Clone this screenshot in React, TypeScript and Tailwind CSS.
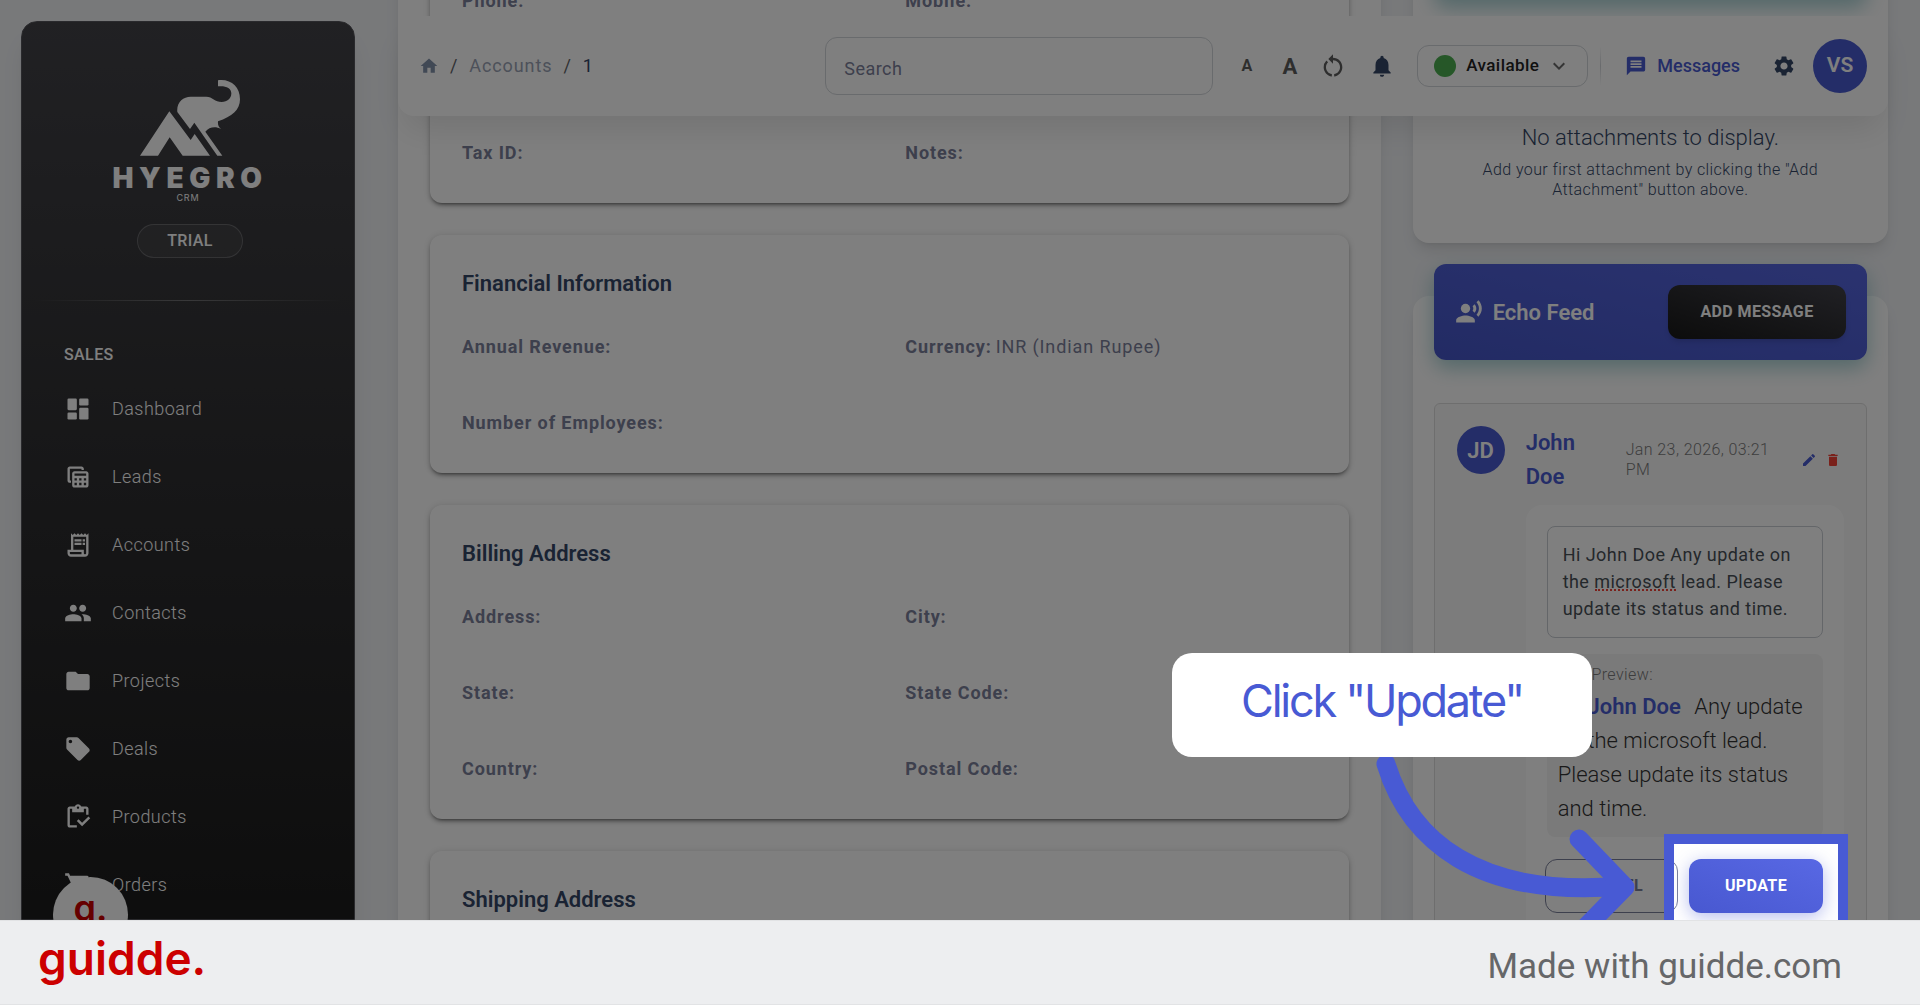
import type { ReactNode } from "react";
import {
  MdDelete,
  MdEdit,
  MdFolder,
  MdHome,
  MdKeyboardArrowDown,
  MdLocalOffer,
  MdMessage,
  MdNotifications,
  MdOutlineInventory,
  MdOutlineReceiptLong,
  MdOutlineTableView,
  MdPeople,
  MdRecordVoiceOver,
  MdRestartAlt,
  MdSettings,
  MdShoppingCart,
} from "react-icons/md";

type Field = { label: string; value?: string };

const navItems: { label: string; icon: ReactNode }[] = [
  { label: "Dashboard", icon: <DashboardIcon /> },
  { label: "Leads", icon: <MdOutlineTableView /> },
  { label: "Accounts", icon: <MdOutlineReceiptLong /> },
  { label: "Contacts", icon: <MdPeople /> },
  { label: "Projects", icon: <MdFolder /> },
  { label: "Deals", icon: <MdLocalOffer /> },
  { label: "Products", icon: <MdOutlineInventory /> },
  { label: "Orders", icon: <MdShoppingCart /> },
];

const sections: { title?: string; fields: Field[] }[] = [
  {
    fields: [
      { label: "Phone:" },
      { label: "Mobile:" },
      { label: "" },
      { label: "" },
      { label: "Tax ID:" },
      { label: "Notes:" },
    ],
  },
  {
    title: "Financial Information",
    fields: [
      { label: "Annual Revenue:" },
      { label: "Currency:", value: "INR (Indian Rupee)" },
      { label: "Number of Employees:" },
    ],
  },
  {
    title: "Billing Address",
    fields: [
      { label: "Address:" },
      { label: "City:" },
      { label: "State:" },
      { label: "State Code:" },
      { label: "Country:" },
      { label: "Postal Code:" },
    ],
  },
  { title: "Shipping Address", fields: [] },
];

function DashboardIcon() {
  return (
    <svg viewBox="0 0 24 24" width="1em" height="1em" fill="currentColor">
      <rect x="3" y="3" width="8" height="10" rx="1" />
      <rect x="3" y="15" width="8" height="6" rx="1" />
      <rect x="13" y="11" width="8" height="10" rx="1" />
      <rect x="13" y="3" width="8" height="6" rx="1" />
    </svg>
  );
}

function ElephantLogo() {
  return (
    <svg
      viewBox="420 235 306 232"
      className="ml-1 w-[102px]"
      fill="currentColor"
      aria-hidden="true"
    >
      <path d="M423 465 511 332l64 86 12-18 46 65h-82l-39-55-35 55z" />
      <path d="M657 239c38-5 66 19 66 57 0 32-24 52-66 66-1 9 1 17 10 23-19-9-36-6-48 8l51 72h-15l-69-99-13 19-38-51c-3-29 17-46 40-46h47c18 0 26 16 46 16 17 0 29-10 29-26 0-17-17-23-40-21z" />
    </svg>
  );
}

function Sidebar() {
  return (
    <aside className="mt-[21px] ml-[21px] flex w-[334px] shrink-0 flex-col rounded-t-2xl border border-[#55555a] bg-linear-to-b from-[#424247] to-[#1c1c1c] text-white shadow-xl">
      <div className="flex flex-col items-center pt-[57px]">
        <div className="flex flex-col items-center">
          <ElephantLogo />
          <span className="mt-2 pl-1 font-[Inter] text-[28px] leading-7 font-black tracking-[0.2em]">
            HYEGRO
          </span>
          <span className="font-[Inter] text-[9px] leading-3 tracking-widest">CRM</span>
        </div>
        <span className="mt-5 ml-1 rounded-full border border-white/20 bg-white/5 px-[29px] py-1 text-base leading-6 font-medium tracking-wide">
          TRIAL
        </span>
      </div>
      <div className="mx-3 mt-[42px] h-px bg-linear-to-r from-transparent via-white/30 to-transparent" />
      <h6 className="mt-[42px] px-[42px] text-base leading-6 font-medium tracking-wide">SALES</h6>
      <nav className="mt-2 flex flex-col">
        {navItems.map((item) => (
          <a key={item.label} href="#" className="flex h-[68px] items-center gap-5 px-[42px]">
            <span className="text-[28px]">{item.icon}</span>
            <span className="text-lg font-light tracking-wide">{item.label}</span>
          </a>
        ))}
      </nav>
    </aside>
  );
}

function Header() {
  return (
    <header className="absolute inset-x-0 top-4 z-10 flex h-[100px] items-center rounded-2xl bg-white px-[21px] shadow-[0_20px_32px_-8px_rgba(0,0,0,0.1)]">
      <nav className="flex items-center gap-[11px] text-lg tracking-wider">
        <a href="#" aria-label="Home" className="text-[20px] text-[#8392ab]">
          <MdHome />
        </a>
        <span className="text-[#5f6368]">/</span>
        <a href="#" className="text-[#9aa3b5]">
          Accounts
        </a>
        <span className="text-[#5f6368]">/</span>
        <span className="text-[#344767]">1</span>
      </nav>
      <input
        type="search"
        aria-label="Search"
        placeholder="Search"
        className="ml-auto h-[58px] w-[388px] rounded-xl border border-[#d2d6da] px-[18px] pt-1 text-lg tracking-wide placeholder:text-[#7b809a]"
      />
      <div className="ml-3 flex items-center text-[#5c5c5c]">
        <button aria-label="Smaller text" className="w-[43px] text-base font-bold">
          A
        </button>
        <button aria-label="Larger text" className="w-[43px] text-[22px] font-bold">
          A
        </button>
        <button aria-label="Reset text size" className="flex w-[43px] justify-center text-[28px]">
          <MdRestartAlt />
        </button>
      </div>
      <button
        aria-label="Notifications"
        className="flex w-[56px] justify-center text-[26px] text-[#344767]"
      >
        <MdNotifications />
      </button>
      <label className="relative ml-[7px] flex h-[42px] w-[171px] items-center rounded-xl border border-[#d2d6da] pl-4">
        <span className="size-[22px] rounded-full bg-[#4caf50]" />
        <select
          aria-label="Status"
          className="ml-2.5 flex-1 appearance-none text-[17px] font-medium tracking-wide text-[#222222]"
        >
          <option>Available</option>
        </select>
        <MdKeyboardArrowDown className="absolute right-4 text-2xl text-[#6b6b6b]" />
      </label>
      <span className="ml-3 h-10 w-px bg-linear-to-b from-transparent via-[#d2d6da] to-transparent" />
      <a href="#" className="ml-6 flex items-center gap-2.5 text-lg font-medium text-[#485ad0]">
        <MdMessage className="text-[22px]" />
        Messages
      </a>
      <button aria-label="Settings" className="ml-8 text-2xl text-[#344767]">
        <MdSettings />
      </button>
      <span className="ml-[17px] flex size-[54px] items-center justify-center rounded-full bg-[#485ad0] text-[21px] font-semibold text-white">
        VS
      </span>
    </header>
  );
}

function DetailCard({ title, fields }: { title?: string; fields: Field[] }) {
  return (
    <section className="rounded-xl bg-white px-8 pt-8 pb-3 shadow-[0_3px_3px_-2px_rgba(0,0,0,0.4),0_3px_4px_rgba(0,0,0,0.2),0_1px_8px_rgba(0,0,0,0.14)]">
      {title && (
        <h5 className="mb-2 text-[22px] leading-[34px] font-semibold text-[#344767]">{title}</h5>
      )}
      <dl className="grid grid-cols-2 gap-x-8">
        {fields.map((field, index) => (
          <div
            key={index}
            className="flex h-[76px] items-center gap-1 text-lg tracking-wider text-[#7b809a]"
          >
            <dt className="font-bold">{field.label}</dt>
            <dd>{field.value}</dd>
          </div>
        ))}
      </dl>
    </section>
  );
}

function BlueBar({ children }: { children?: ReactNode }) {
  return (
    <div className="-mt-8 flex h-24 items-center rounded-xl bg-linear-to-tr from-[#4556c8] to-[#5666e0] px-[21px] text-white shadow-[0_8px_20px_rgba(0,120,130,0.35)]">
      {children}
    </div>
  );
}

function Attachments() {
  return (
    <section className="mt-[37px] flow-root rounded-2xl bg-white px-[21px] pb-[43px] shadow-lg">
      <BlueBar />
      <div className="px-5 pt-[122px] text-center font-light text-[#344767]">
        <p className="text-[22px] leading-8">No attachments to display.</p>
        <p className="mt-1.5 text-base leading-5 tracking-wide">
          Add your first attachment by clicking the "Add Attachment" button above.
        </p>
      </div>
    </section>
  );
}

function ClickHint() {
  return (
    <>
      {/* dims everything around the highlighted button */}
      <div className="pointer-events-none absolute -inset-[25px] z-50 border-10 border-[#485ad4] shadow-[0_0_0_4000px_rgba(0,0,0,0.5)]" />
      <svg
        viewBox="1370 740 280 210"
        className="pointer-events-none absolute right-[174px] -bottom-[38px] z-50 h-[210px] w-[280px]"
        fill="none"
        stroke="#485ad4"
        strokeWidth="19"
        strokeLinecap="round"
        strokeLinejoin="round"
        aria-hidden="true"
      >
        <path d="M1387 763C1410 838 1477 898 1624 885" />
        <path d="M1580 838l46 48-46 47" />
      </svg>
      <div className="absolute right-[231px] bottom-[156px] z-50 flex h-[104px] w-[420px] items-center justify-center rounded-[20px] bg-white pb-2 font-[Inter] text-[45px] tracking-tighter whitespace-nowrap text-[#485ad4]">
        Click "Update"
      </div>
    </>
  );
}

function EchoFeed() {
  return (
    <section className="mt-[53px] flow-root rounded-2xl bg-white px-[21px] pb-10 shadow-lg">
      <BlueBar>
        <MdRecordVoiceOver className="text-[28px]" />
        <h5 className="ml-2.5 text-[22px] font-semibold">Echo Feed</h5>
        <button className="ml-auto h-[54px] w-[178px] rounded-xl bg-linear-to-tr from-[#191919] to-[#42424a] text-base font-bold tracking-wide shadow-md">
          ADD MESSAGE
        </button>
      </BlueBar>
      <article className="mt-[43px] flex gap-[21px] rounded-md border border-[#dddddd] bg-[#f8f8f8] p-[22px]">
        <span className="flex size-12 shrink-0 items-center justify-center rounded-full bg-[#485ad0] text-[22px] font-semibold text-white">
          JD
        </span>
        <div className="min-w-0 flex-1">
          <div className="flex items-center">
            <h6 className="mr-5 w-20 text-[22px] leading-[34px] font-semibold text-[#485ad0]">
              John
              <br />
              Doe
            </h6>
            <time className="w-[150px] text-base leading-5 font-light tracking-wide text-[#7b7b7b]">
              Jan 23, 2026, 03:21 PM
            </time>
            <div className="ml-auto flex gap-2 pr-[3px] text-base">
              <button aria-label="Edit message" className="text-[#485ad0]">
                <MdEdit />
              </button>
              <button aria-label="Delete message" className="text-[#f44336]">
                <MdDelete />
              </button>
            </div>
          </div>
          <div className="mt-[11px] rounded-2xl bg-white p-[21px]">
            <div className="relative">
              <textarea
                aria-label="Message"
                spellCheck={false}
                rows={3}
                defaultValue="Hi John Doe Any update on the microsoft lead. Please update its status and time."
                className="block h-[112px] w-full resize-none overflow-hidden rounded-lg border border-[#c8ccd2] px-[15px] py-[14px] text-lg leading-[27px] tracking-wide text-[#495057]"
              />
              <span className="absolute top-[63px] left-12 w-[81px] border-b-2 border-dotted border-[#f44336]" />
            </div>
            <div className="mt-4 rounded-lg bg-[#f5f5f5] p-[11px]">
              <p className="mb-[5px] text-base leading-5 font-light tracking-wide text-[#7b7b7b]">
                Live Preview:
              </p>
              <p className="text-[22px] leading-[34px] font-light text-[#333333]">
                Hi <b className="mr-2 ml-1 font-semibold text-[#485ad0]">John Doe</b> Any update on
                the microsoft lead. Please update its status and time.
              </p>
            </div>
            <div className="mt-[22px] flex justify-end gap-[11px]">
              <button className="h-[54px] w-[133px] shrink-0 rounded-xl border border-[#7b809a] text-base font-bold tracking-wide text-[#7b809a]">
                CANCEL
              </button>
              <div className="relative shrink-0">
                <button className="block h-[54px] w-[134px] rounded-xl bg-linear-to-tr from-[#4858d0] to-[#5868e4] text-base font-bold tracking-wide text-white shadow-[0_4px_18px_rgba(72,90,212,0.4)]">
                  UPDATE
                </button>
                <ClickHint />
              </div>
            </div>
          </div>
        </div>
      </article>
    </section>
  );
}

export default function App() {
  return (
    <div className="flex h-screen flex-col font-[Roboto,sans-serif]">
      <div className="relative flex min-h-0 flex-1 overflow-hidden bg-[#f0f2f5]">
        <Sidebar />
        <main className="relative mr-8 ml-[43px] min-w-0 flex-1">
          <Header />
          <div className="-mt-[101px] grid grid-cols-3 gap-8">
            <div className="col-span-2 flex flex-col gap-8 bg-white p-8 shadow-lg">
              {sections.map((section, index) => (
                <DetailCard key={index} {...section} />
              ))}
            </div>
            <div>
              <Attachments />
              <EchoFeed />
            </div>
          </div>
        </main>
        <div className="absolute -bottom-8 left-[53px] flex size-[75px] justify-center rounded-full bg-white font-[Inter] text-4xl leading-[62px] font-semibold text-[#cc0000]">
          g.
        </div>
      </div>
      <footer className="flex h-[85px] shrink-0 items-center justify-between border-y border-[#e2e3e5] bg-[#edeef0] pr-[78px] pl-[38px]">
        <span className="pb-2.5 font-[Inter] text-[46px] leading-none font-semibold text-[#cc0000]">
          guidde.
        </span>
        <span className="pt-2.5 text-[35px] text-[#666769]">Made with guidde.com</span>
      </footer>
    </div>
  );
}
